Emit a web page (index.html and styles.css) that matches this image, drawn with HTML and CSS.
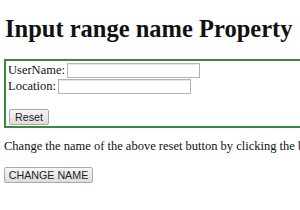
FILE: index.html
```html
<!DOCTYPE html>
<html lang="en">
<head>
    <meta charset="UTF-8">
    <title>Input range name Property</title>
    <link rel="stylesheet" href="styles.css">
</head>
<body>
    <h1>Input range name Property</h1>
    <form class="user-form">
        <div class="row">UserName: <input type="text" class="field"></div>
        <div class="row">Location: <input type="text" class="field"></div>
        <div class="row row-gap"><input type="reset" class="btn" id="reset-btn" value="Reset"></div>
    </form>
    <p class="note">Change the name of the above reset button by clicking the below button.</p>
    <button class="btn btn-change" onclick="changeName()">CHANGE NAME</button>

    <script>
        function changeName() {
            document.getElementById('reset-btn').value = 'Clear';
        }
    </script>
</body>
</html>
```

FILE: styles.css
```css
body {
    margin: 0 0 0 4px;
    font-family: "Liberation Serif", "Times New Roman", serif;
    font-size: 12.5px;
    color: #111;
    background-color: #fff;
    overflow: hidden;
    white-space: nowrap;
}

h1 {
    font-size: 24.5px;
    line-height: 27px;
    margin: 15px 0 17px 1px;
}

.user-form {
    border: 2px solid #3a8a3a;
    border-right: none;
    padding: 1px 0 1px 2px;
    width: 400px;
}

.row {
    display: flex;
    align-items: center;
    height: 16px;
    line-height: 16px;
}

.field {
    width: 133px;
    height: 15px;
    box-sizing: border-box;
    margin: 0 0 0 2px;
    padding: 0;
    border: 1px solid #b4b4b4;
    box-shadow: inset 0 1px 1px #e4e4e4;
    font-size: 12px;
}

.row-gap {
    height: auto;
    margin: 15px 0 0 1px;
}

.btn {
    font-family: "Liberation Sans", Arial, sans-serif;
    font-size: 10.7px;
    color: #222;
    background: linear-gradient(#f6f6f6, #dddddd);
    border: 1px solid #a8a8a8;
    border-radius: 2px;
    padding: 0 5px;
    height: 16px;
    line-height: 14px;
}

.note {
    margin: 11px 0 13px;
    line-height: 15px;
}

.btn-change {
    width: 89px;
    padding: 0;
}
```
